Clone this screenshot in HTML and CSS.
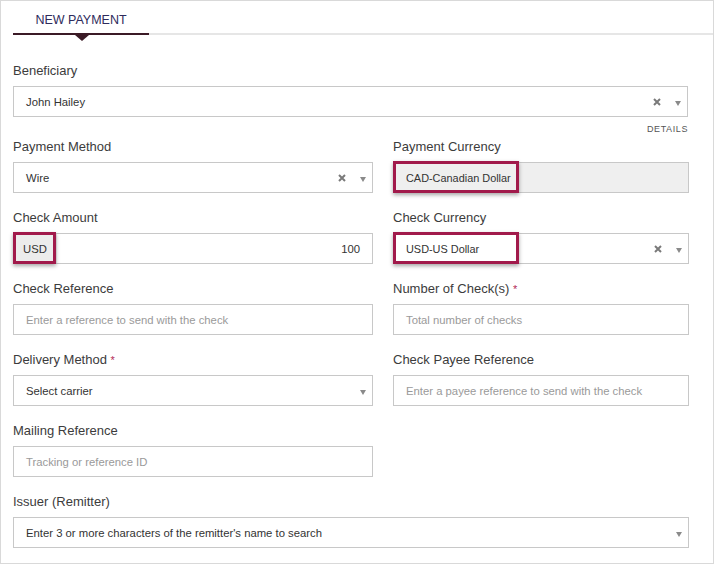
FILE: index.html
```html
<!DOCTYPE html>
<html lang="en">
<head>
    <meta charset="UTF-8">
    <meta name="viewport" content="width=device-width, initial-scale=1.0">
    <title>New Payment</title>
    <link rel="stylesheet" href="styles.css">
</head>
<body>
    <div class="panel">
        <div class="tabs">
            <div class="tab active">NEW PAYMENT</div>
        </div>

        <div class="form">
            <div class="field">
                <label>Beneficiary</label>
                <div class="input select">
                    <span class="value">John Hailey</span>
                    <span class="clear"><svg width="8" height="8" viewBox="0 0 8 8"><path d="M1 1L7 7M7 1L1 7" stroke="#7a7a7a" stroke-width="2"/></svg></span>
                    <span class="caret"></span>
                </div>
            </div>
            <div class="details">DETAILS</div>

            <div class="grid">
                <div class="field">
                    <label>Payment Method</label>
                    <div class="input select">
                        <span class="value">Wire</span>
                        <span class="clear"><svg width="8" height="8" viewBox="0 0 8 8"><path d="M1 1L7 7M7 1L1 7" stroke="#7a7a7a" stroke-width="2"/></svg></span>
                        <span class="caret"></span>
                    </div>
                </div>
                <div class="field">
                    <label>Payment Currency</label>
                    <div class="input disabled">
                        <span class="value short">CAD-Canadian Dollar</span>
                        <span class="mark mark-wide"></span>
                    </div>
                </div>

                <div class="field">
                    <label>Check Amount</label>
                    <div class="input amount">
                        <span class="prefix">USD</span>
                        <span class="value num">100</span>
                        <span class="mark mark-small"></span>
                    </div>
                </div>
                <div class="field">
                    <label>Check Currency</label>
                    <div class="input select">
                        <span class="value short">USD-US Dollar</span>
                        <span class="clear"><svg width="8" height="8" viewBox="0 0 8 8"><path d="M1 1L7 7M7 1L1 7" stroke="#7a7a7a" stroke-width="2"/></svg></span>
                        <span class="caret"></span>
                        <span class="mark mark-wide"></span>
                    </div>
                </div>

                <div class="field">
                    <label>Check Reference</label>
                    <div class="input"><span class="placeholder">Enter a reference to send with the check</span></div>
                </div>
                <div class="field">
                    <label>Number of Check(s) <span class="req">*</span></label>
                    <div class="input"><span class="placeholder">Total number of checks</span></div>
                </div>

                <div class="field">
                    <label>Delivery Method <span class="req">*</span></label>
                    <div class="input select">
                        <span class="value">Select carrier</span>
                        <span class="caret"></span>
                    </div>
                </div>
                <div class="field">
                    <label>Check Payee Reference</label>
                    <div class="input"><span class="placeholder">Enter a payee reference to send with the check</span></div>
                </div>

                <div class="field">
                    <label>Mailing Reference</label>
                    <div class="input"><span class="placeholder">Tracking or reference ID</span></div>
                </div>
                <div></div>

                <div class="field full">
                    <label>Issuer (Remitter)</label>
                    <div class="input select">
                        <span class="value">Enter 3 or more characters of the remitter's name to search</span>
                        <span class="caret"></span>
                    </div>
                </div>
            </div>
        </div>
    </div>
</body>
</html>
```

FILE: styles.css
```css
body {
    margin: 0;
    font-family: "Liberation Sans", Arial, sans-serif;
    background: #fff;
    color: #3a3a3a;
}
.panel {
    box-sizing: border-box;
    width: 714px;
    height: 564px;
    border: 1px solid #d9d9d9;
    padding-left: 12px;
}
.tabs {
    display: flex;
    border-bottom: 2px solid #e6e6e6;
}
.tab {
    position: relative;
    width: 136px;
    padding: 11px 0 5px;
    margin-bottom: -2px;
    line-height: 16px;
    font-size: 12.5px;
    text-align: center;
    color: #2e2b5c;
    border-bottom: 2px solid #3b1a26;
}
.tab.active::after {
    content: "";
    position: absolute;
    left: 62px;
    bottom: -8px;
    border-top: 6px solid #3b1a26;
    border-left: 7px solid transparent;
    border-right: 7px solid transparent;
}
.form {
    padding: 26px 25px 0 0;
}
.field label {
    display: block;
    font-size: 13px;
    line-height: 20px;
    margin-bottom: 5px;
    color: #3c3c3c;
}
.req {
    color: #b32a57;
    font-size: 11px;
}
.input {
    position: relative;
    display: flex;
    align-items: center;
    box-sizing: border-box;
    height: 31px;
    padding: 0 12px;
    border: 1px solid #c8c8c8;
    font-size: 11.3px;
    color: #333;
    background: #fff;
}
.input .value {
    flex: 1;
    white-space: nowrap;
}
.input .short {
    font-size: 10.9px;
}
.placeholder {
    color: #9a9a9a;
}
.input.select {
    padding-right: 6px;
}
.clear {
    display: flex;
    width: 8px;
    margin-right: 14px;
}
.caret {
    width: 0;
    height: 0;
    margin-top: 3px;
    border-top: 5px solid #8a8a8a;
    border-left: 3px solid transparent;
    border-right: 3px solid transparent;
}
.input.disabled {
    background: #efefef;
}
.input.amount {
    padding-left: 0;
}
.prefix {
    align-self: stretch;
    display: flex;
    align-items: center;
    padding: 0 10px 0 9px;
    background: #ececec;
}
.num {
    text-align: right;
}
.mark {
    position: absolute;
    top: -2px;
    left: -1px;
    box-sizing: border-box;
    height: 32px;
    border: 3px solid #a11a4b;
    box-shadow: 0 2px 4px rgba(0, 0, 0, 0.35);
}
.mark-wide {
    width: 126px;
}
.mark-small {
    width: 43px;
}
.details {
    margin: 4px 0 0;
    line-height: 16px;
    font-size: 9px;
    letter-spacing: 0.6px;
    text-align: right;
    color: #555;
}
.grid {
    display: grid;
    grid-template-columns: 360px 296px;
    column-gap: 20px;
    row-gap: 15px;
}
.full {
    grid-column: 1 / -1;
}
```
